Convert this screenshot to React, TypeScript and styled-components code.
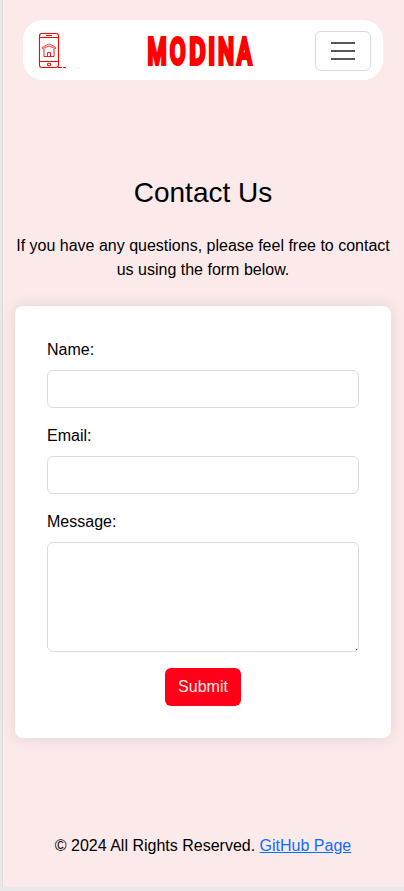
import React from "react";
import styled, { createGlobalStyle } from "styled-components";

const GlobalStyle = createGlobalStyle`
  *, *::before, *::after { box-sizing: border-box; }
  body {
    margin: 0;
    background: #e8e8e8;
    color: #000;
    font: 400 16px/24px "Liberation Sans", Arial, sans-serif;
  }
`;

const Page = styled.div`
  display: flex;
  flex-direction: column;
  width: 401px;
  height: 887px;
  margin-left: 3px;
  padding-top: 20px;
  overflow: hidden;
  background: #fce9e9;
  box-shadow: -1px 0 0 #dcdcdc;
`;

const Navbar = styled.nav`
  display: flex;
  align-items: center;
  justify-content: space-between;
  width: 360px;
  height: 60px;
  margin-left: 20px;
  padding: 0 12px;
  border-radius: 20px;
  background: #fff;
`;

const Brand = styled.a`
  display: flex;
  width: 52px;
`;

const Wordmark = styled.svg`
  display: block;
  width: 108px;
  height: 50px;
  overflow: visible;
  fill: #f00;
  stroke: #f00;
  stroke-width: 3.8px;
  stroke-linejoin: miter;
  stroke-miterlimit: 2;
  font-family: Roboto, sans-serif;
  font-size: 36.5px;
  font-weight: 500;
`;

const Toggler = styled.button`
  display: flex;
  align-items: center;
  justify-content: center;
  width: 56px;
  height: 40px;
  margin-top: 2px;
  padding: 0;
  border: 1px solid #dadbdc;
  border-radius: 6px;
  background: transparent;
`;

const Main = styled.main`
  display: flex;
  flex-direction: column;
  width: 400px;
  padding: 96px 12px 0;
`;

const Title = styled.h1`
  margin: 0 0 24px;
  font-size: 28px;
  font-weight: 400;
  line-height: 34px;
  text-align: center;
`;

const Intro = styled.p`
  margin: 0 0 24px;
  text-align: center;
`;

const Form = styled.form`
  display: flex;
  flex-direction: column;
  gap: 16px;
  padding: 32px;
  border-radius: 8px;
  background: #fff;
  box-shadow: 0 0 15px rgba(0, 0, 0, 0.1);
`;

const Field = styled.div`
  display: flex;
  flex-direction: column;
  gap: 8px;
`;

const Control = styled.input`
  display: block;
  width: 100%;
  height: ${(p: { $height?: number }) => p.$height ?? 38}px;
  margin: 0;
  padding: 6px 12px;
  border: 1px solid #dcdcdc;
  border-radius: 6px;
  outline: none;
  background: #fff;
  font: inherit;
  resize: none;
`;

const MessageBox = styled.div`
  position: relative;
`;

const Grip = styled.svg`
  position: absolute;
  right: 1px;
  bottom: 1px;
  width: 3px;
  height: 3px;
  pointer-events: none;
`;

const Submit = styled.button`
  align-self: center;
  width: 76px;
  height: 38px;
  padding: 0;
  border: 0;
  border-radius: 6px;
  background: #ff0018;
  color: #fce9e9;
  font: inherit;
`;

const Footer = styled.footer`
  width: 400px;
  margin-top: 96px;
  text-align: center;

  a { color: #0d6efd; text-decoration: underline; }
`;

const PhoneHouseIcon = () => (
  <svg width="32" height="40" viewBox="0 0 32 40" fill="none" stroke="#f00" strokeWidth="1.1">
    <rect x="4.5" y="3.5" width="19" height="34" rx="2.5" />
    <path d="M4.5 7.5h19M4.5 31.5h19M11 5.5h6M23 37.5h4M28 37.5h3" />
    <rect x="12.5" y="33.2" width="3.2" height="2.6" rx="1.2" />
    <path d="M7.4 18.6v-1.4L14 13.9l6.6 3.3v1.4L14 16z" strokeWidth="0.75" />
    <path d="M9 18.5v8h10v-8M12.5 26v-3.5h3V26" strokeWidth="0.9" />
  </svg>
);

const letters: [string, number, number][] = [
  ["M", 0.6, 0.6],
  ["O", 22.7, 0.63],
  ["D", 42.3, 0.69],
  ["I", 61.3, 0.66],
  ["N", 71, 0.62],
  ["A", 90, 0.61],
];

export default function App() {
  return (
    <>
      <GlobalStyle />
      <Page>
        <Navbar>
          <Brand aria-label="Home">
            <PhoneHouseIcon />
          </Brand>
          <Wordmark viewBox="0 0 108 50" role="img" aria-label="MODINA">
            {letters.map(([ch, x, sx]) => (
              <text key={ch} transform={`translate(${x} 39) scale(${sx} 1)`}>{ch}</text>
            ))}
          </Wordmark>
          <Toggler aria-label="Toggle navigation">
            <svg width="30" height="30" viewBox="0 0 30 30" fill="none" stroke="#54575d" strokeWidth="2">
              <path d="M3 7h24M3 15h24M3 23h24" />
            </svg>
          </Toggler>
        </Navbar>
        <Main>
          <Title>Contact Us</Title>
          <Intro>If you have any questions, please feel free to contact us using the form below.</Intro>
          <Form onSubmit={(e) => e.preventDefault()}>
            <Field>
              <label htmlFor="name">Name:</label>
              <Control id="name" type="text" />
            </Field>
            <Field>
              <label htmlFor="email">Email:</label>
              <Control id="email" type="email" />
            </Field>
            <Field>
              <label htmlFor="message">Message:</label>
              <MessageBox>
                <Control as="textarea" id="message" $height={110} />
                <Grip viewBox="0 0 3 3">
                  <path d="M1 1h1v1H1z" fill="#444" />
                </Grip>
              </MessageBox>
            </Field>
            <Submit type="submit">Submit</Submit>
          </Form>
        </Main>
        <Footer>
          © 2024 All Rights Reserved. <a href="#github">GitHub Page</a>
        </Footer>
      </Page>
    </>
  );
}
